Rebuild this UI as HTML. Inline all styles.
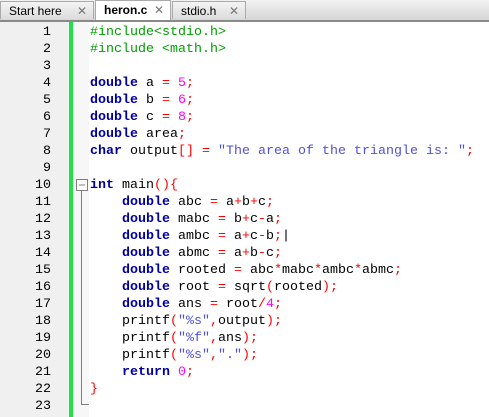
<!DOCTYPE html><html><head><style>
body{margin:0;width:489px;height:417px;overflow:hidden;background:#fff;font-family:"Liberation Sans",sans-serif;position:relative}
.tabs{position:absolute;left:0;top:0;width:489px;height:20px;background:linear-gradient(#f2f2f2,#d6d6d6);border-bottom:2px solid #8a8a8a}
.tab{position:absolute;top:1px;height:18px;background:linear-gradient(#f4f4f4,#dcdcdc);border:1px solid #aaa;border-bottom:none;font-size:12px;line-height:18px;padding-left:8px;box-sizing:border-box;color:#000}
.tab.a{background:#fff;font-weight:bold;height:20px;top:0}
.tab i{position:absolute;right:6px;top:0;font-style:normal;color:#777;font-size:12px;font-weight:normal}
.gut{position:absolute;left:0;top:22px;width:69px;height:395px;background:#f0f0f0}
.green{position:absolute;left:69px;top:22px;width:4px;height:395px;background:#22e04a}
.fold{position:absolute;left:73px;top:22px;width:16px;height:395px;background:#f7f7f7}
.ln{position:absolute;right:438px;font:13.33px/17px "Liberation Mono",monospace;color:#000;text-align:right}
.code{position:absolute;left:90px;top:24px;font:13.33px/17px "Liberation Mono",monospace;white-space:pre;color:#000}
.k{color:#0000a0;font-weight:bold}.n{color:#ff00ff}.o{color:#ff0000}.s{color:#5050e0}.p{color:#00a000}
</style></head><body>
<div class="tabs">
<div class="tab" style="left:0;width:94px">Start here<i>✕</i></div>
<div class="tab a" style="left:95px;width:76px">heron.c<i>✕</i></div>
<div class="tab" style="left:172px;width:74px">stdio.h<i>✕</i></div>
</div>
<div class="gut"></div><div class="green"></div><div class="fold"></div>
<div class="ln" style="top:24px;left:0;width:51px">1<br>2<br>3<br>4<br>5<br>6<br>7<br>8<br>9<br>10<br>11<br>12<br>13<br>14<br>15<br>16<br>17<br>18<br>19<br>20<br>21<br>22<br>23</div>
<svg style="position:absolute;left:73px;top:22px" width="16" height="395"><rect x="3.5" y="157.5" width="11" height="11" fill="#fff" stroke="#808080"/><line x1="6" y1="163" x2="12" y2="163" stroke="#808080"/><line x1="8.5" y1="168" x2="8.5" y2="382.5" stroke="#808080"/><line x1="8" y1="382.5" x2="16" y2="382.5" stroke="#808080"/></svg>
<div class="code"><span class="p">#include&lt;stdio.h&gt;</span>
<span class="p">#include &lt;math.h&gt;</span>

<span class="k">double</span> a <span class="o">=</span> <span class="n">5</span><span class="o">;</span>
<span class="k">double</span> b <span class="o">=</span> <span class="n">6</span><span class="o">;</span>
<span class="k">double</span> c <span class="o">=</span> <span class="n">8</span><span class="o">;</span>
<span class="k">double</span> area<span class="o">;</span>
<span class="k">char</span> output<span class="o">[]</span> <span class="o">=</span> <span class="s">"The area of the triangle is: "</span><span class="o">;</span>

<span class="k">int</span> main<span class="o">(){</span>
    <span class="k">double</span> abc <span class="o">=</span> a<span class="o">+</span>b<span class="o">+</span>c<span class="o">;</span>
    <span class="k">double</span> mabc <span class="o">=</span> b<span class="o">+</span>c<span class="o">-</span>a<span class="o">;</span>
    <span class="k">double</span> ambc <span class="o">=</span> a<span class="o">+</span>c<span class="o">-</span>b<span class="o">;</span>|
    <span class="k">double</span> abmc <span class="o">=</span> a<span class="o">+</span>b<span class="o">-</span>c<span class="o">;</span>
    <span class="k">double</span> rooted <span class="o">=</span> abc<span class="o">*</span>mabc<span class="o">*</span>ambc<span class="o">*</span>abmc<span class="o">;</span>
    <span class="k">double</span> root <span class="o">=</span> sqrt<span class="o">(</span>rooted<span class="o">);</span>
    <span class="k">double</span> ans <span class="o">=</span> root<span class="o">/</span><span class="n">4</span><span class="o">;</span>
    printf<span class="o">(</span><span class="s">"%s"</span><span class="o">,</span>output<span class="o">);</span>
    printf<span class="o">(</span><span class="s">"%f"</span><span class="o">,</span>ans<span class="o">);</span>
    printf<span class="o">(</span><span class="s">"%s"</span><span class="o">,</span><span class="s">"."</span><span class="o">);</span>
    <span class="k">return</span> <span class="n">0</span><span class="o">;</span>
<span class="o">}</span>
</div>
</body></html>
